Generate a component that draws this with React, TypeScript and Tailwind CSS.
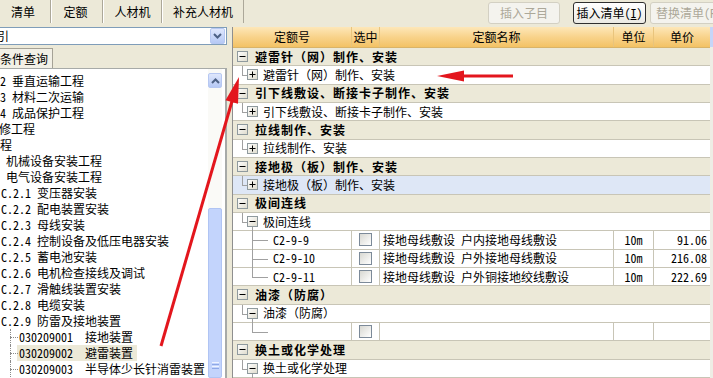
import React from 'react';

type Row =
  | { k: 'g'; t: string }
  | { k: 'c'; t: string; s: '+' | '-'; sel?: boolean }
  | { k: 'l'; code: string; name: string; unit: string; price: string; last?: boolean };

const rows: Row[] = [
  { k: 'g', t: '避雷针（网）制作、安装' },
  { k: 'c', t: '避雷针（网）制作、安装', s: '+' },
  { k: 'g', t: '引下线敷设、断接卡子制作、安装' },
  { k: 'c', t: '引下线敷设、断接卡子制作、安装', s: '+' },
  { k: 'g', t: '拉线制作、安装' },
  { k: 'c', t: '拉线制作、安装', s: '+' },
  { k: 'g', t: '接地极（板）制作、安装' },
  { k: 'c', t: '接地极（板）制作、安装', s: '+', sel: true },
  { k: 'g', t: '极间连线' },
  { k: 'c', t: '极间连线', s: '-' },
  { k: 'l', code: 'C2-9-9', name: '接地母线敷设 户内接地母线敷设', unit: '10m', price: '91.06' },
  { k: 'l', code: 'C2-9-10', name: '接地母线敷设 户外接地母线敷设', unit: '10m', price: '216.08' },
  { k: 'l', code: 'C2-9-11', name: '接地母线敷设 户外铜接地绞线敷设', unit: '10m', price: '222.69', last: true },
  { k: 'g', t: '油漆（防腐）' },
  { k: 'c', t: '油漆（防腐）', s: '-' },
  { k: 'l', code: '', name: '', unit: '', price: '', last: true },
  { k: 'g', t: '换土或化学处理' },
  { k: 'c', t: '换土或化学处理', s: '-' },
];

const treeRows = [
  { t: '2 垂直运输工程', pad: 'pl-0' },
  { t: '3 材料二次运输', pad: 'pl-0' },
  { t: '4 成品保护工程', pad: 'pl-0' },
  { t: '修工程', pad: '-ml-[1px]' },
  { t: '程', pad: 'pl-0' },
  { t: '机械设备安装工程', pad: 'pl-[6px]' },
  { t: '电气设备安装工程', pad: 'pl-[6px]' },
  { t: 'C.2.1 变压器安装', pad: 'pl-[1px]' },
  { t: 'C.2.2 配电装置安装', pad: 'pl-[1px]' },
  { t: 'C.2.3 母线安装', pad: 'pl-[1px]' },
  { t: 'C.2.4 控制设备及低压电器安装', pad: 'pl-[1px]' },
  { t: 'C.2.5 蓄电池安装', pad: 'pl-[1px]' },
  { t: 'C.2.6 电机检查接线及调试', pad: 'pl-[1px]' },
  { t: 'C.2.7 滑触线装置安装', pad: 'pl-[1px]' },
  { t: 'C.2.8 电缆安装', pad: 'pl-[1px]' },
  { t: 'C.2.9 防雷及接地装置', pad: 'pl-[1px]' },
];

const items = [
  { code: '030209001', name: '接地装置' },
  { code: '030209002', name: '避雷装置', sel: true },
  { code: '030209003', name: '半导体少长针消雷装置' },
];

// 展开/收起小方块
function ExpandBox({ sign }: { sign: '+' | '-' }) {
  return (
    <svg width="11" height="11" viewBox="0 0 11 11" className="shrink-0">
      <defs>
        <linearGradient id="bx" x1="0" y1="0" x2="1" y2="1">
          <stop offset="0" stopColor="#ffffff" />
          <stop offset="1" stopColor="#dedbcc" />
        </linearGradient>
      </defs>
      <rect x="0.5" y="0.5" width="10" height="10" fill="url(#bx)" stroke="#8f9a9e" />
      <line x1="2.5" y1="5.5" x2="8.5" y2="5.5" stroke="#000" />
      {sign === '+' && <line x1="5.5" y1="2.5" x2="5.5" y2="8.5" stroke="#000" />}
    </svg>
  );
}

function Check() {
  return <div className="w-[13px] h-[13px] border border-[#7c8a99] bg-linear-to-br from-[#d8d8d2] to-white" />;
}

function Chevron({ up }: { up?: boolean }) {
  return (
    <svg width="9" height="6" viewBox="0 0 9 6">
      <path d={up ? 'M1 5 L4.5 1.5 L8 5' : 'M1 1 L4.5 4.5 L8 1'} fill="none" stroke="#4d6185" strokeWidth="2" />
    </svg>
  );
}

function TableRow({ r }: { r: Row }) {
  if (r.k === 'g') {
    return (
      <div className="h-[19px] flex items-center bg-[#ECE9D8] border-b border-[#c8c5b6]">
        <div className="ml-[4px] flex">
          <ExpandBox sign="-" />
        </div>
        <span className="ml-[7px] font-bold tracking-[1px] whitespace-nowrap">{r.t}</span>
      </div>
    );
  }
  if (r.k === 'c') {
    return (
      <div className={`h-[19px] relative flex items-center border-b border-[#c8c5b6] ${r.sel ? 'bg-[#dee7f6]' : 'bg-white'}`}>
        <div className="absolute left-[9px] top-0 h-[10px] w-px bg-[#a0a0a0]" />
        <div className="absolute left-[9px] top-[9px] w-[5px] h-px bg-[#a0a0a0]" />
        {r.s === '-' && <div className="absolute left-[19px] top-[14px] bottom-[-1px] w-px bg-[#a0a0a0]" />}
        <div className="ml-[14px] flex">
          <ExpandBox sign={r.s} />
        </div>
        <span className="ml-[5px] whitespace-nowrap">{r.t}</span>
      </div>
    );
  }
  return (
    <div className="h-[19px] flex border-b border-[#c8c5b6] bg-white">
      <div className="w-[119px] shrink-0 relative flex items-center border-r border-[#c8c5b6]">
        {r.last ? (
          <div className="absolute left-[19px] top-0 h-[10px] w-px bg-[#a0a0a0]" />
        ) : (
          <div className="absolute left-[19px] top-0 bottom-[-1px] w-px bg-[#a0a0a0]" />
        )}
        <div className="absolute left-[19px] top-[9px] w-[16px] h-px bg-[#a0a0a0]" />
        <span className="ml-[40px]">{r.code}</span>
      </div>
      <div className="w-[28px] shrink-0 flex items-center justify-center border-r border-[#c8c5b6]">
        <Check />
      </div>
      <div className="w-[234px] shrink-0 flex items-center pl-[3px] border-r border-[#c8c5b6] whitespace-pre">{r.name}</div>
      <div className="w-[40px] shrink-0 flex items-center justify-center border-r border-[#c8c5b6]">{r.unit}</div>
      <div className="flex-1 flex items-center justify-end pr-[3px]">{r.price}</div>
    </div>
  );
}

export default function App() {
  return (
    <div className="relative w-[713px] h-[378px] overflow-hidden bg-[#ECE9D8] text-[12px] text-black font-['Noto_Sans_Mono_CJK_SC','Noto_Sans_CJK_SC',sans-serif] leading-[16px]">
      {/* 顶部标签和按钮 */}
      <div className="h-[27px] flex items-start">
        <div className="w-[51px] h-[23px] shrink-0 flex items-center justify-center pr-[4px] border-r border-[#aca899]">清单</div>
        <div className="w-[52px] h-[23px] shrink-0 flex items-center justify-center pr-[3px] border-l border-white border-r border-r-[#aca899]">定额</div>
        <div className="w-[59px] h-[23px] shrink-0 flex items-center justify-center border-l border-white border-r border-r-[#aca899]">人材机</div>
        <div className="w-[82px] h-[23px] shrink-0 flex items-center justify-center border-l border-white border-r border-r-[#aca899]">补充人材机</div>
        <div className="ml-[244px] mt-[2px] w-[72px] h-[22px] shrink-0 flex items-center justify-center rounded-[3px] border border-[#d3d0c3] bg-[#f4f3ee] text-[#aca899]">插入子目</div>
        <div className="ml-[13px] mt-[2px] w-[73px] h-[22px] shrink-0 flex items-center justify-center rounded-[3px] border border-[#2f2f2f] bg-linear-to-b from-white to-[#ebeae4]">
          插入清单(<span className="underline">I</span>)
        </div>
        <div className="ml-[4px] mt-[2px] w-[72px] h-[22px] shrink-0 flex items-center pl-[5px] rounded-[3px] border border-[#d3d0c3] bg-[#f4f3ee] text-[#aca899] whitespace-nowrap">替换清单(R)</div>
      </div>

      <div className="flex h-[351px]">
        {/* 左侧清单树 */}
        <div className="w-[227px] shrink-0 flex flex-col">
          <div className="h-[18px] flex items-center bg-white border border-l-0 border-[#7f9db9]">
            <span className="-ml-[3px] flex-1">引</span>
            <div className="w-[15px] h-[16px] mr-[1px] flex items-center justify-center rounded-[2px] border border-[#b7c8f2] bg-linear-to-b from-[#dfe7fc] to-[#b6c9f5]">
              <Chevron />
            </div>
          </div>
          <div className="mt-[3px] w-[53px] h-[20px] flex items-center border-t border-r border-[#a5a296] bg-[#f2f0e6]">条件查询</div>
          <div className="flex-1 flex bg-white border-t border-r-2 border-[#a7aaa8] overflow-hidden">
            <div className="w-[208px] shrink-0 pt-[4px] whitespace-pre">
              {treeRows.map((r) => (
                <div key={r.t} className={`h-[16px] flex items-center ${r.pad}`}>{r.t}</div>
              ))}
              {items.map((it) => (
                <div key={it.code} className="h-[16px] relative flex items-center">
                  <div className="absolute left-[10px] top-0 bottom-0 border-l border-dotted border-[#8a8a8a]" />
                  <div className="absolute left-[10px] top-[8px] w-[8px] border-t border-dotted border-[#8a8a8a]" />
                  <span className={`ml-[17px] pl-[2px] pr-[4px] ${it.sel ? 'bg-[#ECE9D8]' : ''}`}>
                    {it.code}  {it.name}
                  </span>
                </div>
              ))}
            </div>
            <div className="w-[14px] shrink-0 flex flex-col pt-[4px] bg-[#fafaf7]">
              <div className="h-[15px] flex items-center justify-center rounded-[2px] border border-[#b7c8f2] bg-linear-to-b from-[#dfe7fc] to-[#b6c9f5]">
                <Chevron up />
              </div>
              <div className="h-[120px]" />
              <div className="flex-1 rounded-[2px] border border-[#b0c4f3] bg-[#c3d4fc] pt-[153px] flex flex-col items-center gap-[1px]">
                <div className="w-[7px] h-px bg-[#eef3ff]" />
                <div className="w-[7px] h-px bg-[#8ea8e6]" />
                <div className="w-[7px] h-px bg-[#eef3ff]" />
                <div className="w-[7px] h-px bg-[#8ea8e6]" />
              </div>
            </div>
            <div className="w-[3px] shrink-0" />
          </div>
        </div>

        {/* 右侧定额表 */}
        <div className="ml-[5px] flex-1 flex border-l border-[#8e8f8f] bg-white overflow-hidden">
          <div className="flex-1 flex flex-col">
            <div className="h-[21px] shrink-0 flex border-b border-[#d9b468] bg-linear-to-b from-[#fde7b8] via-[#f8d38b] to-[#f3c264]">
              <div className="w-[119px] flex items-center justify-center border-r border-[#e9c47c]">定额号</div>
              <div className="w-[28px] flex items-center justify-center border-r border-[#e9c47c]">选中</div>
              <div className="w-[234px] flex items-center justify-center border-r border-[#e9c47c]">定额名称</div>
              <div className="w-[40px] flex items-center justify-center border-r border-[#e9c47c]">单位</div>
              <div className="flex-1 flex items-center justify-center">单价</div>
            </div>
            {rows.map((r, i) => (
              <TableRow key={i} r={r} />
            ))}
          </div>
          <div className="w-[3px] shrink-0 flex flex-col bg-[#eeede5]">
            <div className="h-[20px] bg-[#c6d5f8]" />
          </div>
        </div>
      </div>

      {/* 红色箭头标注 */}
      <svg className="absolute inset-0 pointer-events-none" width="713" height="378" viewBox="0 0 713 378">
        <line x1="513" y1="76" x2="458" y2="76" stroke="#e3161d" strokeWidth="3" />
        <polygon points="437,76 464,70.5 464,81.5" fill="#e3161d" />
        <line x1="161" y1="346" x2="232.5" y2="99.5" stroke="#e3161d" strokeWidth="3" />
        <polygon points="239,77 238,103.8 225.5,100.2" fill="#e3161d" />
      </svg>
    </div>
  );
}
